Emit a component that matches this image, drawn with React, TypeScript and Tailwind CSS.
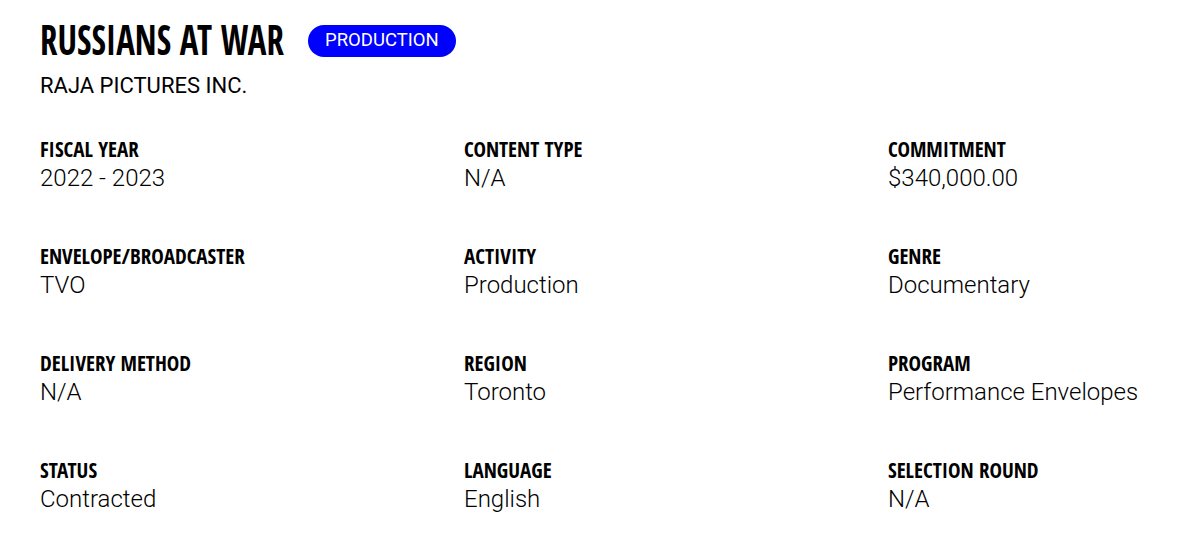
const items: [string, string][] = [
  ["FISCAL YEAR", "2022 - 2023"],
  ["CONTENT TYPE", "N/A"],
  ["COMMITMENT", "$340,000.00"],
  ["ENVELOPE/BROADCASTER", "TVO"],
  ["ACTIVITY", "Production"],
  ["GENRE", "Documentary"],
  ["DELIVERY METHOD", "N/A"],
  ["REGION", "Toronto"],
  ["PROGRAM", "Performance Envelopes"],
  ["STATUS", "Contracted"],
  ["LANGUAGE", "English"],
  ["SELECTION ROUND", "N/A"],
];

export default function App() {
  return (
    <div className="w-[1200px] h-[560px] bg-white text-black pl-10 pt-[15px] font-['Roboto',sans-serif]">
      <div className="flex items-center gap-[25px]">
        <h1 className="w-[243px] whitespace-nowrap font-['Open_Sans_Condensed','Roboto_Condensed',sans-serif] font-bold text-[41px] leading-[48px]">
          <span className="inline-block origin-left scale-x-[0.85]">RUSSIANS AT WAR</span>
        </h1>
        <span className="bg-[#0000ff] text-white rounded-full h-[32px] px-[17px] flex items-center text-[18.5px] font-normal mt-[3px]">
          PRODUCTION
        </span>
      </div>
      <div className="mt-[9px] text-[22px] leading-[28px]">RAJA PICTURES INC.</div>
      <div className="mt-[37px] grid grid-cols-[424px_424px_1fr] gap-y-[52px]">
        {items.map(([label, value]) => (
          <div key={label} className="flex flex-col gap-[3px]">
            <div className="font-['Open_Sans_Condensed','Roboto_Condensed',sans-serif] font-bold text-[21px] leading-[24px]">
              {label}
            </div>
            <div className="font-light text-[24px] leading-[28px]">{value}</div>
          </div>
        ))}
      </div>
    </div>
  );
}
